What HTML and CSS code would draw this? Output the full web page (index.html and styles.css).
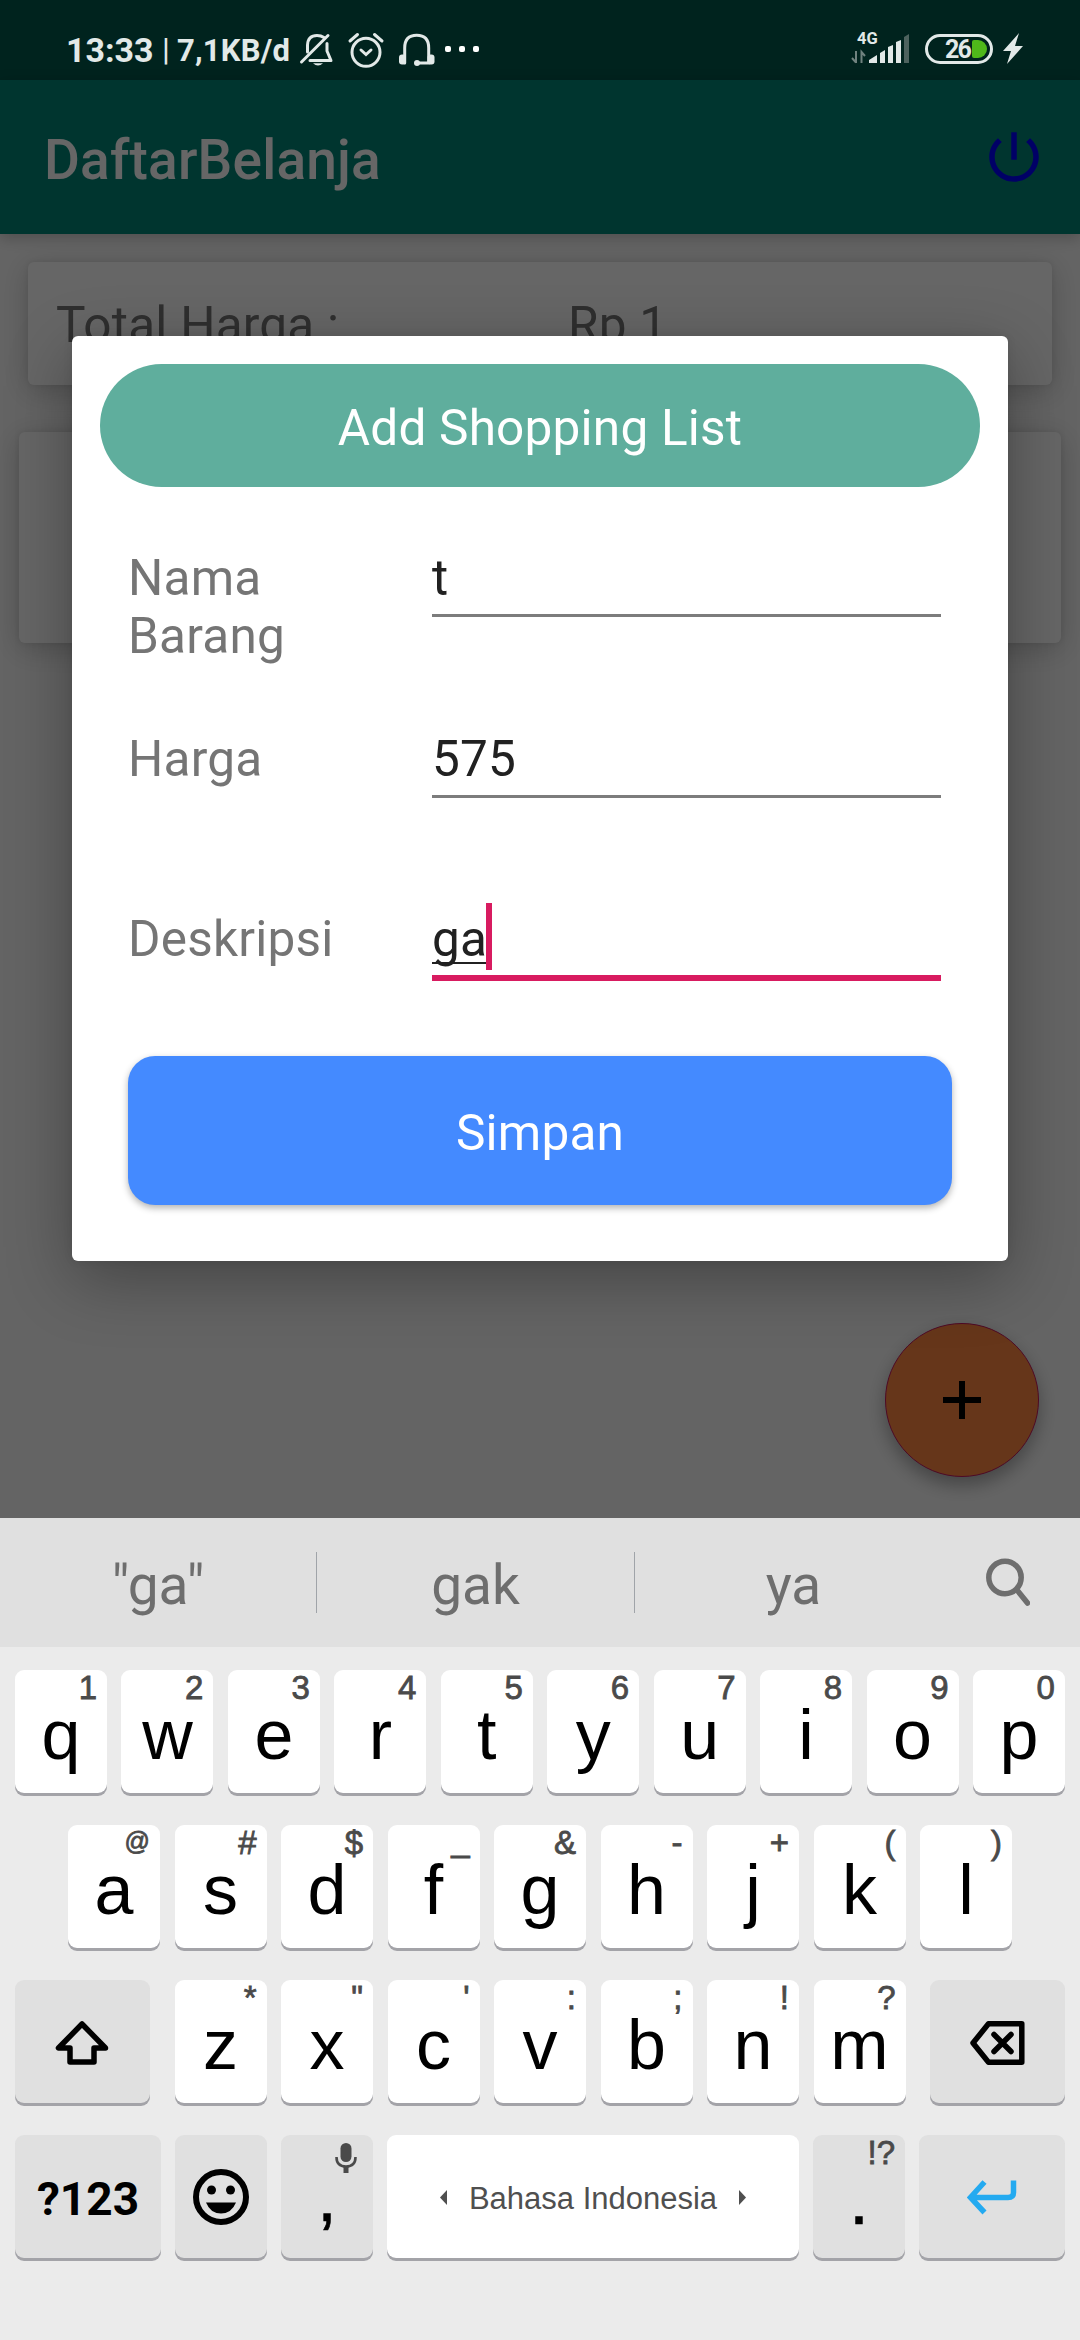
FILE: index.html
```html
<!DOCTYPE html>
<html lang="id">
<head>
<meta charset="utf-8">
<title>DaftarBelanja</title>
<link rel="stylesheet" href="styles.css">
</head>
<body>
<div class="screen">
  <main class="app">
    <div class="status-bg"></div>
    <header class="appbar">
      <h1 class="appbar-title">DaftarBelanja</h1>
      <svg class="power" viewBox="0 0 24 24"><path fill="currentColor" d="M13 3h-2v10h2V3zm4.83 2.17l-1.42 1.42C17.99 7.86 19 9.81 19 12c0 3.87-3.13 7-7 7s-7-3.13-7-7c0-2.19 1.01-4.14 2.58-5.42L6.17 5.17C4.23 6.82 3 9.26 3 12c0 4.97 4.03 9 9 9s9-4.03 9-9c0-2.74-1.23-5.18-3.17-6.83z"/></svg>
    </header>
    <section class="card total"><span>Total Harga :</span><span>Rp 1</span></section>
    <section class="card item"></section>
    <button class="fab" aria-label="Tambah"><svg viewBox="0 0 38 38"><path d="M19 0v38M0 19h38" stroke="#000" stroke-width="6"/></svg></button>
  </main>
  <div class="scrim"></div>

  <div class="statusbar">
    <span class="clock">13:33</span>
    <span class="pipe">|</span>
    <span class="speed">7,1KB/d</span>
    <svg class="status-icons" viewBox="296 30 184 40" fill="none" stroke="#e2e9e8" stroke-width="3" stroke-linecap="round">
      <path d="M307.500 52V45q.5-9.500 9.500-9.500 4 0 7 2M327 43.500V51l4 9.500H310" stroke-linejoin="round"/>
      <path d="M301.500 62l26.500-26.500"/>
      <path d="M313 63.200h10q-5 4.500-10 0z" fill="#e2e9e8" stroke="none"/>
      <circle cx="366" cy="52.300" r="14"/>
      <path d="M350 41l7.500-6.500M374.500 34.500l7.500 6.500M361 50l5 4.500 5-4.500"/>
      <path d="M404.700 63V48q0-12.700 12-12.700T428.700 48V63M417 63h12"/>
      <rect x="399" y="54.500" width="7" height="10" rx="3" fill="#e2e9e8" stroke="none"/>
      <rect x="427.500" y="54.500" width="7" height="10" rx="3" fill="#e2e9e8" stroke="none"/>
      <circle cx="417" cy="63" r="3" fill="#e2e9e8" stroke="none"/>
      <g fill="#fff" stroke="none"><rect x="445" y="46" width="6" height="6" rx="2"/><rect x="459" y="46" width="6" height="6" rx="2"/><rect x="473" y="46" width="6" height="6" rx="2"/></g>
    </svg>
    <svg class="signal" viewBox="850 30 62 38">
      <text x="857" y="44" class="net">4G</text>
      <path d="M856 51v12M852 58l4 4.500M861.500 63V52l3.500 4" stroke="#70827f" stroke-width="2" fill="none"/>
      <path fill="#e2e9e8" d="M869 63v-3l8-5v8zM880 63V53l5-3v13zM888 63V47l5-2v18zM896 63V42l5-2v23z"/>
      <path fill="#4d625e" d="M904 63V37l5-3v29z"/>
    </svg>
    <div class="battery"><span>26</span><i></i></div>
    <svg class="bolt" viewBox="0 0 20 31"><path fill="#e2e9e8" d="M16 0L0 18h8L4 31l16-18h-8z"/></svg>
  </div>

  <div class="dialog" role="dialog">
    <div class="dialog-title">Add Shopping List</div>
    <form class="fields">
      <div class="field"><span class="label">Nama Barang</span><span class="input">t</span></div>
      <div class="field"><span class="label">Harga</span><span class="input">575</span></div>
      <div class="field"><span class="label">Deskripsi</span><span class="input focused"><span class="composing">ga</span><i class="caret"></i></span></div>
    </form>
    <div class="save">Simpan</div>
  </div>

  <div class="keyboard">
    <div class="suggestions">
      <span>"ga"</span><span>gak</span><span>ya</span>
      <svg class="search" viewBox="0 0 44 48" fill="none" stroke="#6e6e6e" stroke-width="5.500" stroke-linecap="round"><circle cx="19" cy="19.500" r="16.200"/><path d="M31 32l10.500 13"/></svg>
    </div>
    <div class="keys">
      <div class="row">
        <div class="key"><sup>1</sup>q</div><div class="key"><sup>2</sup>w</div><div class="key"><sup>3</sup>e</div><div class="key"><sup>4</sup>r</div><div class="key"><sup>5</sup>t</div><div class="key"><sup>6</sup>y</div><div class="key"><sup>7</sup>u</div><div class="key"><sup>8</sup>i</div><div class="key"><sup>9</sup>o</div><div class="key"><sup>0</sup>p</div>
      </div>
      <div class="row middle">
        <div class="key"><sup class="at">@</sup>a</div><div class="key"><sup>#</sup>s</div><div class="key"><sup>$</sup>d</div><div class="key"><sup class="low">_</sup>f</div><div class="key"><sup>&amp;</sup>g</div><div class="key"><sup>-</sup>h</div><div class="key"><sup>+</sup>j</div><div class="key"><sup>(</sup>k</div><div class="key"><sup>)</sup>l</div>
      </div>
      <div class="row">
        <div class="key mod shift"><svg width="54" height="44" viewBox="0 0 54 44" fill="none" stroke="#000" stroke-width="5.500" stroke-linejoin="round"><path d="M27 3L3.500 27H15v14h24V27h11.500z"/></svg></div>
        <div class="key"><sup>*</sup>z</div><div class="key"><sup>"</sup>x</div><div class="key"><sup>'</sup>c</div><div class="key"><sup>:</sup>v</div><div class="key"><sup>;</sup>b</div><div class="key"><sup>!</sup>n</div><div class="key"><sup>?</sup>m</div>
        <div class="key mod back"><svg width="55" height="44" viewBox="0 0 55 44" fill="none" stroke="#000" stroke-width="5.500" stroke-linejoin="round"><path d="M18.500 2.800H51.800V41.200H18.500L3 22z"/><path d="M24 13.500l17 17M41 13.500l-17 17" stroke-linecap="round"/></svg></div>
      </div>
      <div class="row">
        <div class="key mod wide sym">?123</div>
        <div class="key mod"><svg width="56" height="56" viewBox="0 0 56 56"><circle cx="28" cy="28" r="25" fill="none" stroke="#000" stroke-width="6"/><circle cx="18.500" cy="21" r="4.500"/><circle cx="37.500" cy="21" r="4.500"/><path d="M13 33.500H43Q38.500 44.500 28 44.500T13 33.500z"/></svg></div>
        <div class="key mod heavy"><svg class="mic" viewBox="0 0 22 30"><rect x="5.500" y="0" width="11" height="19" rx="5.500" fill="#4a4a4a"/><path d="M1.500 14q0 9.500 9.500 9.500T20.500 14" fill="none" stroke="#4a4a4a" stroke-width="2.600"/><path d="M11 23v7" stroke="#4a4a4a" stroke-width="5"/></svg>,</div>
        <div class="key space"><svg width="7" height="15" viewBox="0 0 7 15"><path d="M7 0v15L0 7.500z" fill="#4f4f4f"/></svg><span>Bahasa Indonesia</span><svg width="7" height="15" viewBox="0 0 7 15"><path d="M0 0v15l7-7.500z" fill="#4f4f4f"/></svg></div>
        <div class="key mod heavy"><sup>!?</sup>.</div>
        <div class="key mod wide enter"><svg width="50" height="35" viewBox="0 0 50 35" fill="none" stroke="#24aaf0" stroke-width="5.500"><path d="M17.500 2L3.500 17.500l14 15M3.500 17.500H41q5.500 0 5.500-5V0.500"/></svg></div>
      </div>
    </div>
  </div>
</div>
</body>
</html>
```
FILE: styles.css
```css
* { box-sizing: border-box; }
body { margin: 0; }
.screen {
  position: relative;
  width: 1080px;
  height: 2340px;
  overflow: hidden;
  font-family: Roboto, "Noto Sans", sans-serif;
  display: flex;
  flex-direction: column;
  justify-content: space-between;
}

/* App behind the dialog */
.app { height: 1518px; background: #fafafa; position: relative; }
.status-bg { height: 80px; background: #00574b; }
.appbar {
  height: 154px;
  padding: 0 33px 0 44px;
  background: #008577;
  display: flex;
  align-items: center;
  justify-content: space-between;
  box-shadow: 0 4px 14px rgba(0, 0, 0, .22);
}
.appbar-title { margin: 0 0 -6px; font-size: 55px; font-weight: 500; letter-spacing: .2px; color: #fff; line-height: 64px; }
.power { width: 66px; height: 66px; color: #00f; }
.card { background: #fff; border-radius: 6px; box-shadow: 0 6px 28px rgba(0, 0, 0, .2), 0 0 6px rgba(0, 0, 0, .08); }
.total {
  height: 123px;
  margin: 28px 28px 0;
  padding: 34px 28px;
  display: grid;
  grid-template-columns: 512px 1fr;
  font-size: 49.5px;
  letter-spacing: .22px;
  line-height: 58px;
  color: #757575;
}
.item { height: 211px; margin: 47px 19px 0; }
.fab {
  position: absolute;
  right: 41px;
  bottom: 41px;
  width: 154px;
  height: 154px;
  padding: 0;
  border: 1.5px solid #c2185b;
  border-radius: 50%;
  background: #ff8742;
  box-shadow: 0 8px 18px rgba(0, 0, 0, .32);
  display: grid;
  place-items: center;
}
.fab svg { width: 38px; height: 38px; }
.scrim { position: absolute; inset: 0 0 822px; background: rgba(0, 0, 0, .6); }

/* System status bar */
.statusbar {
  position: absolute;
  inset: 0 0 auto;
  height: 80px;
  padding-left: 66px;
  padding-top: 30px;
  display: flex;
  color: #e2e9e8;
  font-weight: 700;
  white-space: nowrap;
  line-height: 40px;
}
.clock { width: 96px; font-size: 34px; }
.pipe { width: 15px; font-size: 32px; font-weight: 400; margin-top: -1px; }
.speed { width: 119px; font-size: 31px; letter-spacing: .2px; padding-top: 1px; }
.status-icons { width: 184px; height: 40px; flex: none; }
.signal { width: 62px; height: 38px; margin-left: 370px; flex: none; }
.net { font: 700 16.500px Roboto, sans-serif; fill: #e2e9e8; }
.battery {
  width: 68px;
  height: 30px;
  margin: 4px 10px 0 13px;
  border: 3px solid #e2e9e8;
  border-radius: 15px;
  display: flex;
  align-items: center;
  justify-content: flex-end;
  padding-right: 3px;
  flex: none;
}
.battery span { font-size: 25px; letter-spacing: -1.8px; line-height: 24px; padding-top: 1px; }
.battery i { width: 15px; height: 18px; background: #4fb81a; border-radius: 2px 9px 9px 2px; margin-left: 2px; }
.bolt { width: 20px; height: 31px; margin-top: 3px; flex: none; }

/* Dialog */
.dialog {
  position: absolute;
  left: 72px;
  top: 336px;
  width: 936px;
  height: 925px;
  padding: 28px;
  background: #fff;
  border-radius: 6px;
  box-shadow: 0 18px 66px rgba(0, 0, 0, .32), 0 0 10px rgba(0, 0, 0, .08);
  font-size: 49.5px;
  letter-spacing: .22px;
  line-height: 58px;
}
.dialog-title {
  height: 123px;
  border-radius: 62px;
  background: #5fae9d;
  color: #fff;
  text-align: center;
  padding-top: 35px;
}
.fields { margin: 0; padding: 55px 0 0 28px; }
.field { height: 180.5px; display: grid; grid-template-columns: 304px 509px; align-items: start; }
.label { color: #757575; width: 200px; padding-top: 7px; }
.input {
  height: 75px;
  padding-top: 7px;
  color: #212121;
  border-bottom: 3px solid #7c7c7c;
  display: flex;
}
.focused { height: 78px; border-bottom: 6px solid #d81b60; }
.composing { border-bottom: 2.5px solid #212121; height: 54px; }
.caret { width: 6px; height: 67px; margin-top: -7px; background: #d81b60; margin-left: -1px; }
.save {
  height: 149px;
  margin: -28px 28px 0;
  border-radius: 27px;
  background: #448aff;
  color: #fff;
  text-align: center;
  padding-top: 48px;
  box-shadow: 0 3px 7px rgba(0, 0, 0, .3);
}

/* Keyboard */
.keyboard { height: 822px; background: #ebebeb; position: relative; }
.suggestions {
  height: 129px;
  background: #e0e0e0;
  display: grid;
  grid-template-columns: 317px 318px 317px 128px;
  align-items: center;
  color: #6e6e6e;
  font-size: 55px;
  text-align: center;
}
.suggestions span { height: 61px; line-height: 67px; margin-top: -1px; border-right: 1px solid #a0a4a9; }
.suggestions span:nth-child(3) { border: 0; }
.search { width: 44px; height: 48px; margin-left: 34px; margin-top: -2px; }
.keys { padding: 23px 15px 0; display: flex; flex-direction: column; gap: 32px; }
.row { display: flex; justify-content: space-between; height: 123px; }
.middle { padding: 0 53px; }
.key {
  position: relative;
  width: 92px;
  height: 123px;
  border-radius: 9px;
  background: #fff;
  box-shadow: 0 3px 0 #a3a3a8;
  text-align: center;
  font: 70px/80px "Liberation Sans", Arial, sans-serif;
  padding-top: 25px;
  color: #000;
}
.key sup {
  position: absolute;
  right: 10px;
  top: 0;
  font-size: 33px;
  line-height: 36px;
  color: #4a4a4a;
  -webkit-text-stroke: .8px #4a4a4a;
}
.key .at { font-size: 25px; line-height: 33px; }
.key .low { top: -3px; }
.mod { background: #e0e0e0; }
.shift, .back { width: 135px; }
.shift { margin-right: 10px; }
.back { margin-left: 10px; }
.wide { width: 146px; }
.key:has(> svg:only-child) { display: grid; place-items: center; padding: 0; }
.key svg { display: block; }
.shift svg { margin: 2px 2px 0 0; }
.back svg { margin-top: 2px; }
.enter svg { margin-top: 2px; }
.key.sym { font: 700 46px/54px Roboto, sans-serif; padding-top: 37px; }
.heavy { -webkit-text-stroke: .6px #000; }
.key .mic { position: absolute; left: 54px; top: 8px; width: 22px; height: 30px; }
.key.space {
  width: 412px;
  display: flex;
  align-items: center;
  justify-content: center;
  gap: 22px;
  padding: 2px 0 0;
  font-size: 31px;
  line-height: 36px;
  color: #4f4f4f;
}
.space span { padding-top: 3px; }
```
